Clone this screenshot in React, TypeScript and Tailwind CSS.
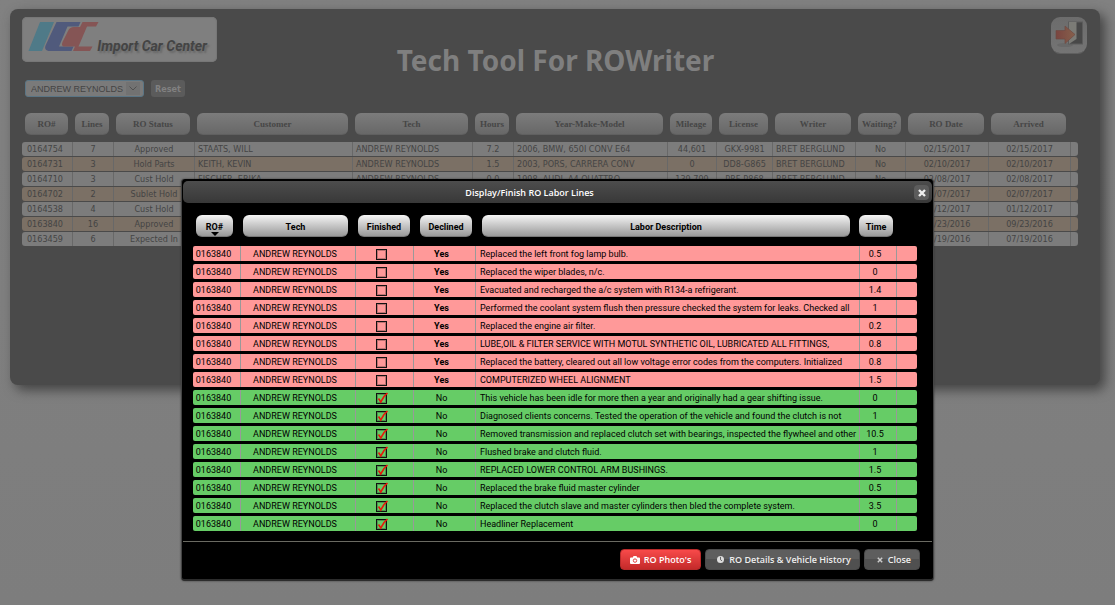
import React from "react";

type Order = {
  ro: string; lines: string; status: string; date: string; arrived: string;
  customer?: string; tech?: string; hours?: string; car?: string; miles?: string;
  plate?: string; writer?: string; waiting?: string;
};

const orderColumns: { label: string; width: string }[] = [
  { label: "RO#", width: "w-[50px]" },
  { label: "Lines", width: "w-[41px]" },
  { label: "RO Status", width: "w-[81px]" },
  { label: "Customer", width: "w-[158px]" },
  { label: "Tech", width: "w-[120px]" },
  { label: "Hours", width: "w-[41px]" },
  { label: "Year-Make-Model", width: "w-[154px]" },
  { label: "Mileage", width: "w-[49px]" },
  { label: "License", width: "w-[56px]" },
  { label: "Writer", width: "w-[83px]" },
  { label: "Waiting?", width: "w-[50px]" },
  { label: "RO Date", width: "w-[83px]" },
  { label: "Arrived", width: "w-[82px]" },
];

const base = { tech: "ANDREW REYNOLDS", writer: "BRET BERGLUND", waiting: "No" };

const orders: Order[] = [
  { ...base, ro: "0164754", lines: "7", status: "Approved", customer: "STAATS, WILL", hours: "7.2", car: "2006, BMW, 650I CONV E64", miles: "44,601", plate: "GKX-9981", date: "02/15/2017", arrived: "02/15/2017" },
  { ...base, ro: "0164731", lines: "3", status: "Hold Parts", customer: "KEITH, KEVIN", hours: "1.5", car: "2003, PORS, CARRERA CONV", miles: "0", plate: "DD8-G865", date: "02/10/2017", arrived: "02/10/2017" },
  { ...base, ro: "0164710", lines: "3", status: "Cust Hold", customer: "FISCHER, ERIKA", hours: "0.0", car: "1998, AUDI, A4 QUATTRO", miles: "139,799", plate: "PRF-P868", date: "02/08/2017", arrived: "02/08/2017" },
  { ro: "0164702", lines: "2", status: "Sublet Hold", date: "02/07/2017", arrived: "02/07/2017" },
  { ro: "0164538", lines: "4", status: "Cust Hold", date: "01/12/2017", arrived: "01/12/2017" },
  { ro: "0163840", lines: "16", status: "Approved", date: "09/23/2016", arrived: "09/23/2016" },
  { ro: "0163459", lines: "6", status: "Expected In", date: "07/19/2016", arrived: "07/19/2016" },
];

const laborColumns: { label: string; width: string; pad: string }[] = [
  { label: "RO#", width: "w-[47px]", pad: "pl-[3px] pr-[7px]" },
  { label: "Tech", width: "w-[115px]", pad: "pl-[3px] pr-[7px]" },
  { label: "Finished", width: "w-[58px]", pad: "pl-[3px] pr-[3px]" },
  { label: "Declined", width: "w-[62px]", pad: "pl-[7px] pr-[3px]" },
  { label: "Labor Description", width: "w-auto", pad: "pl-[7px] pr-[9px]" },
  { label: "Time", width: "w-[37px]", pad: "pl-0 pr-[3px]" },
];

const laborLines: { done: boolean; text: string; time: string }[] = [
  { done: false, text: "Replaced the left front fog lamp bulb.", time: "0.5" },
  { done: false, text: "Replaced the wiper blades, n/c.", time: "0" },
  { done: false, text: "Evacuated and recharged the a/c system with R134-a refrigerant.", time: "1.4" },
  { done: false, text: "Performed the coolant system flush then pressure checked the system for leaks. Checked all", time: "1" },
  { done: false, text: "Replaced the engine air filter.", time: "0.2" },
  { done: false, text: "LUBE,OIL & FILTER SERVICE WITH MOTUL SYNTHETIC OIL, LUBRICATED ALL FITTINGS,", time: "0.8" },
  { done: false, text: "Replaced the battery, cleared out all low voltage error codes from the computers. Initialized", time: "0.8" },
  { done: false, text: "COMPUTERIZED WHEEL ALIGNMENT", time: "1.5" },
  { done: true, text: "This vehicle has been idle for more then a year and originally had a gear shifting issue.", time: "0" },
  { done: true, text: "Diagnosed clients concerns. Tested the operation of the vehicle and found the clutch is not", time: "1" },
  { done: true, text: "Removed transmission and replaced clutch set with bearings, inspected the flywheel and other", time: "10.5" },
  { done: true, text: "Flushed brake and clutch fluid.", time: "1" },
  { done: true, text: "REPLACED LOWER CONTROL ARM BUSHINGS.", time: "1.5" },
  { done: true, text: "Replaced the brake fluid master cylinder", time: "0.5" },
  { done: true, text: "Replaced the clutch slave and master cylinders then bled the complete system.", time: "3.5" },
  { done: true, text: "Headliner Replacement", time: "0" },
];

function Logo() {
  return (
    <div className="relative h-[45px] w-[195px] rounded-[5px] bg-[#7f7f7f] shadow-[inset_0_0_1px_1px_#777]">
      <svg viewBox="0 0 80 45" className="h-[45px] w-20" aria-hidden="true">
        <polygon points="18,5 32,5 20,34 6.500,34" fill="#4f7a88" />
        <path d="M34.500 5H58.500L56.500 9.500H45.500L37 29.500H51.500L49.500 34H28C23.500 34 22 31.500 24 27.500Z" fill="#505a7c" />
        <path d="M60.500 5H76.500L74 9.500H65L56.500 29.500H70.500L68 34H51L53 29.500H42.500C39.500 29.500 39.500 27 41 24L46 14C47.500 11 49 10 52 10H58Z" fill="#855555" />
      </svg>
      <span className="absolute right-[10px] bottom-[7px] font-['Roboto',sans-serif] text-[14px] leading-[18px] font-bold whitespace-nowrap text-[#444] italic [text-shadow:2px_2px_2px_#666]">
        Import Car Center
      </span>
    </div>
  );
}

function ExitIcon() {
  return (
    <svg viewBox="0 0 36 36" className="size-9" aria-hidden="true">
      <defs>
        <linearGradient id="arrow" x1="0" x2="1">
          <stop offset="0" stopColor="#7a4540" />
          <stop offset="1" stopColor="#86604c" />
        </linearGradient>
      </defs>
      <ellipse cx="14" cy="28" rx="8" ry="2" fill="#696969" />
      <rect x="17.500" y="5" width="14" height="22" fill="#484848" stroke="#5c5c5c" />
      <polygon points="18,5 25.500,5 25.500,22 18,27" fill="#7b7b76" />
      <path d="M5 13.500H14V9L24 17.500L14 26.500V22H5Z" fill="url(#arrow)" stroke="#6e4a44" strokeWidth=".7" />
    </svg>
  );
}

function OrdersTable() {
  const cell = "border-l border-[#686868] p-0 text-center whitespace-nowrap overflow-hidden";
  const left = "overflow-hidden border-l border-[#686868] py-0 pl-[3px] whitespace-nowrap";
  return (
    <table className="w-full table-fixed border-separate border-spacing-x-0 border-spacing-y-px text-[9px] leading-[14px] text-[#444]">
      <colgroup>
        {orderColumns.map((c) => <col key={c.label} className={c.width} />)}
        <col className="w-[8px]" />
      </colgroup>
      <thead>
        <tr>
          {orderColumns.map((c) => (
            <th key={c.label} className="pt-0 pr-1 pb-[6px] pl-[3px]">
              <div className="h-[22px] rounded-md border-b border-[#606060] bg-linear-to-b from-[#7c7c7c] to-[#686868] font-['Liberation_Serif',serif] text-[9px] leading-[22px] font-bold text-[#464646]">
                {c.label}
              </div>
            </th>
          ))}
          <td />
        </tr>
      </thead>
      <tbody>
        {orders.map((o, i) => (
          <tr key={o.ro} className={i % 2 ? "bg-[#7b7065]" : "bg-[#7c7c7c]"}>
            <td className="rounded-l-[3px] p-0 pr-1 text-center">{o.ro}</td>
            <td className={cell}>{o.lines}</td>
            <td className={cell}>{o.status}</td>
            <td className={left}>{o.customer}</td>
            <td className={left}>{o.tech}</td>
            <td className={cell}>{o.hours}</td>
            <td className={left}>{o.car}</td>
            <td className={cell}>{o.miles}</td>
            <td className={cell}>{o.plate}</td>
            <td className={left}>{o.writer}</td>
            <td className={cell}>{o.waiting}</td>
            <td className={cell}>{o.date}</td>
            <td className={cell}>{o.arrived}</td>
            <td className="rounded-r-[3px] border-l border-[#686868] p-0" />
          </tr>
        ))}
      </tbody>
    </table>
  );
}

function FinishedBox({ done, label }: { done: boolean; label: string }) {
  return (
    <span className="relative block size-[11px]">
      <input
        type="checkbox"
        defaultChecked={done}
        aria-label={label}
        className="peer block size-[11px] appearance-none border border-[#111] shadow-[inset_0_0_0_1px_rgba(0,0,0,0.25)]"
      />
      <svg viewBox="0 0 13 13" className="pointer-events-none absolute -top-px left-0 hidden size-[13px] peer-checked:block" aria-hidden="true">
        <path d="M2.500 6.500L4.800 10L8 4.500L11.500 1" fill="none" stroke="#e8180c" strokeWidth="1.600" />
      </svg>
    </span>
  );
}

function LaborTable() {
  const cell = "border-l border-[#999] pt-px pb-0 pl-0 pr-[6px] text-center whitespace-nowrap";
  return (
    <table className="w-full table-fixed border-separate border-spacing-x-0 border-spacing-y-[3px] text-[9px] leading-[14px] text-black">
      <colgroup>
        {laborColumns.map((c) => <col key={c.label} className={c.width} />)}
        <col className="w-[21px]" />
      </colgroup>
      <thead>
        <tr>
          {laborColumns.map((c, i) => (
            <th key={c.label} className={"pt-0 pb-[6px] " + c.pad}>
              <div className="relative h-[22px] rounded-md border-b border-[#777] bg-linear-to-b from-[#f6f6f6] to-[#999] pt-[2px] text-[9px] leading-[21px] font-bold">
                {c.label}
                {i === 0 && (
                  <svg viewBox="0 0 8 4" className="absolute bottom-0 left-1/2 h-1 w-2 -translate-x-1/2" aria-hidden="true">
                    <polygon points="0,0 8,0 4,4" fill="#000" />
                  </svg>
                )}
              </div>
            </th>
          ))}
          <td />
        </tr>
      </thead>
      <tbody>
        {laborLines.map((l, i) => (
          <tr key={i} className={l.done ? "bg-[#66cc66]" : "bg-[#ff9999]"}>
            <td className="rounded-l-[2px] pt-px pr-[6px] pb-0 pl-0 text-center">0163840</td>
            <td className={cell}>ANDREW REYNOLDS</td>
            <td className={cell}>
              <div className="flex h-[14px] items-center justify-center">
                <FinishedBox done={l.done} label={"Finished line " + (i + 1)} />
              </div>
            </td>
            <td className={cell}>{l.done ? "No" : <b>Yes</b>}</td>
            <td className="overflow-hidden border-l border-[#999] pt-px pb-0 pl-1 whitespace-nowrap">{l.text}</td>
            <td className={cell}>{l.time}</td>
            <td className="rounded-r-[2px] border-l border-[#999] p-0" />
          </tr>
        ))}
      </tbody>
    </table>
  );
}

function LaborDialog() {
  const grey = "flex h-[21px] items-center rounded-[4px] border border-[#4a4a4a] bg-linear-to-b from-[#5e5e5e] from-50% to-[#505050] to-50%";
  return (
    <div className="absolute inset-x-0 top-[179px] flex justify-center">
      <div role="dialog" aria-label="Display/Finish RO Labor Lines" className="w-full max-w-[753px] rounded-[4px] border-x border-b-2 border-x-[#444] border-b-[#2c2c2c] bg-black px-px pt-[2px] font-['Roboto',sans-serif] shadow-[0_0_2px_#333]">
        <div className="relative flex h-[22px] items-center justify-center overflow-hidden rounded-[5px] bg-linear-to-b from-[#4d4d4d] to-[#383838] pt-px pr-14 font-['Open_Sans',sans-serif] text-[9px] font-semibold text-white">
          <h2>Display/Finish RO Labor Lines</h2>
          <button type="button" aria-label="Close dialog" className="absolute right-[3px] flex size-[15px] items-center justify-center rounded-[4px] bg-[#5c5c5c]">
            <svg viewBox="0 0 8 8" className="mt-px size-2" aria-hidden="true">
              <path d="M1 1L7 7M7 1L1 7" stroke="#eee" strokeWidth="2.400" />
            </svg>
          </button>
        </div>
        <div className="pt-[9px] pr-[15px] pb-[7px] pl-[10px]">
          <LaborTable />
        </div>
        <div className="flex h-[38px] justify-end gap-1 border-t border-[#6a6a62] pt-[7px] pr-[12px] font-['Open_Sans',sans-serif] text-[9px] font-semibold text-[#eee]">
          <button type="button" className="flex h-[21px] items-center gap-1 rounded-[4px] border border-[#b82a2a] bg-linear-to-b from-[#f84a4a] to-[#c42a2a] px-[9px] text-white">
            <svg viewBox="0 0 10 8" className="h-2 w-[10px]" aria-hidden="true">
              <path d="M1 1.500H2.800L3.500 0H6.500L7.200 1.500H9Q10 1.500 10 2.500V7Q10 8 9 8H1Q0 8 0 7V2.500Q0 1.500 1 1.500Z" fill="#fff" />
              <circle cx="5" cy="4.600" r="1.700" fill="#fff" stroke="#d33" strokeWidth=".9" />
            </svg>
            RO Photo's
          </button>
          <button type="button" className={grey + " gap-[5px] pr-2 pl-[11px]"}>
            <svg viewBox="0 0 8 8" className="size-[7px]" aria-hidden="true">
              <circle cx="4" cy="4" r="4" fill="#ddd" />
              <path d="M4 1V4.300L5.800 5.500" fill="none" stroke="#555" />
            </svg>
            RO Details &amp; Vehicle History
          </button>
          <button type="button" className={grey + " gap-[5px] pr-2 pl-3"}>
            <svg viewBox="0 0 6 6" className="size-[6px]" aria-hidden="true">
              <path d="M.8 .8L5.200 5.200M5.200 .8L.8 5.200" stroke="#ccc" strokeWidth="1.500" />
            </svg>
            Close
          </button>
        </div>
      </div>
    </div>
  );
}

export default function App() {
  return (
    <div className="relative min-h-screen bg-linear-to-b from-[#818181] to-[#7d7d7d] pt-[9px] pb-6 font-['DejaVu_Sans_Condensed','DejaVu_Sans',sans-serif]">
      <main className="mr-[15px] ml-[10px] min-h-[376px] rounded-lg bg-[#4a4a4a] pt-2 pl-3 shadow-[5px_5px_12px_#444]">
        <header className="grid grid-cols-[1fr_auto_1fr] items-start pr-[11px]">
          <Logo />
          <h1 className="pt-[25px] font-['Noto_Sans',sans-serif] text-[28px] leading-9 font-bold text-[#7f7f7f]">Tech Tool For ROWriter</h1>
          <button type="button" aria-label="Exit" className="mr-[2px] size-9 justify-self-end rounded-[9px] bg-linear-to-b from-[#6c6c6c] to-[#747474] shadow-[0_2px_0_-1px_#606060]">
            <ExitIcon />
          </button>
        </header>
        <form className="flex items-start gap-[7px] pt-[2px] pl-[3px]">
          <div className="relative">
            <select aria-label="Technician" className="block h-[17px] w-[119px] appearance-none rounded-[3px] border border-[#5a7585] bg-[#7a7a7a] pl-[5px] font-['Liberation_Sans',sans-serif] text-[9px] leading-[14px] text-[#444]">
              <option>ANDREW REYNOLDS</option>
            </select>
            <span className="pointer-events-none absolute top-[2px] right-1 flex h-[13px] w-[14px] items-center justify-center bg-[#727272]">
              <svg viewBox="0 0 8 5" className="h-[5px] w-2" aria-hidden="true">
                <path d="M.5 .5L4 4L7.500 .5" fill="none" stroke="#505050" />
              </svg>
            </span>
          </div>
          <button type="button" className="h-[17px] w-[34px] rounded-[3px] bg-[#5b5b5b] pt-[2px] text-[9px] leading-[15px] font-bold text-[#818181]">Reset</button>
        </form>
        <div className="pt-[15px] pr-[22px]">
          <OrdersTable />
        </div>
      </main>
      <LaborDialog />
    </div>
  );
}
